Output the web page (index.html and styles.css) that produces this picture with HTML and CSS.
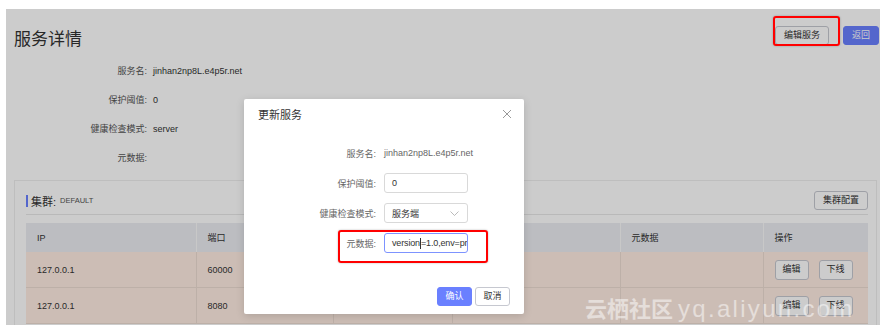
FILE: index.html
```html
<!DOCTYPE html>
<html lang="zh-CN">
<head>
    <meta charset="UTF-8">
    <meta name="viewport" content="width=device-width, initial-scale=1.0">
    <title>服务详情</title>
    <link rel="stylesheet" href="styles.css">
</head>
<body>
    <div class="shot">
        <div class="page">
            <div class="page-head">
                <h1 class="page-title">服务详情</h1>
                <div class="head-actions">
                    <button class="btn">编辑服务</button>
                    <button class="btn btn-primary">返回</button>
                </div>
            </div>

            <div class="info">
                <div class="info-row"><span class="info-label">服务名:</span><span class="info-value">jinhan2np8L.e4p5r.net</span></div>
                <div class="info-row"><span class="info-label">保护阈值:</span><span class="info-value">0</span></div>
                <div class="info-row"><span class="info-label">健康检查模式:</span><span class="info-value">server</span></div>
                <div class="info-row"><span class="info-label">元数据:</span><span class="info-value"></span></div>
            </div>

            <div class="card">
                <div class="card-head">
                    <div class="card-title"><span class="card-bar"></span>集群:<span class="card-sub">DEFAULT</span></div>
                    <button class="btn">集群配置</button>
                </div>
                <table class="instances">
                    <colgroup>
                        <col style="width: 170px">
                        <col style="width: 137px">
                        <col style="width: 119px">
                        <col style="width: 168px">
                        <col style="width: 143px">
                        <col style="width: 105px">
                    </colgroup>
                    <thead>
                        <tr>
                            <th>IP</th>
                            <th>端口</th>
                            <th>权重</th>
                            <th>健康状态</th>
                            <th>元数据</th>
                            <th>操作</th>
                        </tr>
                    </thead>
                    <tbody>
                        <tr>
                            <td>127.0.0.1</td>
                            <td>60000</td>
                            <td>1</td>
                            <td>true</td>
                            <td></td>
                            <td><div class="row-actions"><button class="btn btn-sm">编辑</button><button class="btn btn-sm">下线</button></div></td>
                        </tr>
                        <tr>
                            <td>127.0.0.1</td>
                            <td>8080</td>
                            <td>1</td>
                            <td>true</td>
                            <td></td>
                            <td><div class="row-actions"><button class="btn btn-sm">编辑</button><button class="btn btn-sm">下线</button></div></td>
                        </tr>
                    </tbody>
                </table>
            </div>
        </div>

        <div class="mask"></div>
        <div class="mark mark-edit"></div>

        <div class="modal">
            <div class="modal-head">
                <span class="modal-title">更新服务</span>
                <svg class="modal-close" width="10" height="10" viewBox="0 0 10 10">
                    <path d="M1 1L9 9M9 1L1 9" stroke="#999" stroke-width="1" fill="none"/>
                </svg>
            </div>
            <div class="modal-body">
                <div class="form-row">
                    <span class="form-label">服务名:</span>
                    <span class="form-text">jinhan2np8L.e4p5r.net</span>
                </div>
                <div class="form-row">
                    <span class="form-label">保护阈值:</span>
                    <div class="field">0</div>
                </div>
                <div class="form-row">
                    <span class="form-label">健康检查模式:</span>
                    <div class="field field-select">
                        <span>服务端</span>
                        <svg width="9" height="5" viewBox="0 0 9 5">
                            <path d="M0.5 0.5L4.5 4.5L8.5 0.5" stroke="#aaa" stroke-width="0.8" fill="none"/>
                        </svg>
                    </div>
                </div>
                <div class="form-row">
                    <span class="form-label">元数据:</span>
                    <div class="field field-focus">version<span class="caret"></span>=1.0,env=pr</div>
                </div>
            </div>
            <div class="modal-foot">
                <button class="btn btn-primary btn-md">确认</button>
                <button class="btn btn-md">取消</button>
            </div>
            <div class="mark mark-meta"></div>
        </div>

        <div class="watermark">云栖社区 <span class="watermark-url">yq.aliyun.com</span></div>
    </div>
</body>
</html>
```

FILE: styles.css
```css
body {
    margin: 9px 0 0 6px;
    background-color: #fff;
    font-family: "Liberation Sans", "Noto Sans CJK SC", sans-serif;
    font-size: 9px;
    color: #333;
}

.shot {
    position: relative;
    width: 874px;
    height: 316px;
    overflow: hidden;
    background-color: #fff;
}

.page {
    padding: 0 1px 0 8px;
}

.page-head {
    display: flex;
    justify-content: space-between;
    align-items: flex-start;
    padding-top: 17px;
}

.page-title {
    margin: 4px 0 0;
    font-size: 17px;
    line-height: 20px;
    font-weight: normal;
    color: #333;
}

.head-actions {
    display: flex;
    gap: 14px;
}

.btn {
    height: 19px;
    padding: 0 8px;
    border: 1px solid #c6c8d0;
    border-radius: 3px;
    background-color: #fff;
    color: #333;
    font-family: inherit;
    font-size: 9px;
    line-height: 17px;
}

.btn-primary {
    border-color: #6a80ff;
    background-color: #6a80ff;
    color: #fff;
}

.btn-sm {
    padding: 0 7px;
    height: 20px;
}

.btn-md {
    width: 35px;
    padding: 0;
}

.info {
    margin-top: 6px;
}

.info-row {
    display: flex;
    align-items: center;
    height: 29px;
}

.info-label {
    width: 133px;
    text-align: right;
    color: #555;
}

.info-value {
    margin-left: 6px;
    color: #333;
}

.card {
    margin: 8px 2px 0 0;
    padding: 0 8px 0 11px;
    border: 1px solid #eee;
    border-bottom: none;
    background-color: #fff;
    height: 200px;
}

.card-head {
    display: flex;
    justify-content: space-between;
    align-items: center;
    padding: 10px 0 4px;
    border-bottom: 1px solid #e8e8e8;
}

.card-title {
    display: flex;
    align-items: center;
    font-size: 11px;
    color: #333;
}

.card-bar {
    width: 2px;
    height: 12px;
    margin-right: 3px;
    background-color: #6a80ff;
}

.card-sub {
    margin-left: 4px;
    font-size: 7.5px;
    color: #555;
}

.instances {
    width: 842px;
    margin-top: 8px;
    border-collapse: collapse;
    table-layout: fixed;
}

.instances th {
    height: 29px;
    padding: 0 11px;
    background-color: #ebedf2;
    border-right: 1px solid #fafafa;
    font-weight: normal;
    text-align: left;
    color: #333;
}

.instances td {
    height: 35px;
    padding: 0 11px;
    background-color: #ffede3;
    border-right: 1px solid #eddcd2;
    border-bottom: 1px solid #eddcd2;
    color: #333;
}

.instances th:last-child,
.instances td:last-child {
    border-right: none;
}

.row-actions {
    display: flex;
    gap: 10px;
}

.mask {
    position: absolute;
    inset: 0;
    background-color: rgba(0, 0, 0, 0.2);
}

.mark {
    position: absolute;
    border: 2px solid #ff0000;
    border-radius: 3px;
    box-shadow: 0 0 2px rgba(0, 0, 0, 0.3);
}

.mark-edit {
    left: 767px;
    top: 7px;
    width: 63px;
    height: 26px;
}

.modal {
    position: absolute;
    left: 238px;
    top: 90px;
    width: 280px;
    height: 215px;
    display: flex;
    flex-direction: column;
    background-color: #fff;
    border-radius: 2px;
    box-shadow: 0 2px 8px rgba(0, 0, 0, 0.15);
}

.modal-head {
    display: flex;
    justify-content: space-between;
    align-items: center;
    height: 30px;
    padding: 0 12px 0 14px;
}

.modal-title {
    font-size: 11px;
    color: #333;
}

.modal-body {
    display: flex;
    flex-direction: column;
    gap: 10px;
    padding-top: 14px;
}

.form-row {
    display: flex;
    align-items: center;
    height: 20px;
}

.form-label {
    width: 132px;
    text-align: right;
    color: #666;
}

.form-text {
    margin-left: 8px;
    color: #666;
}

.field {
    box-sizing: border-box;
    display: flex;
    align-items: center;
    width: 84px;
    height: 20px;
    margin-left: 8px;
    padding: 0 7px;
    border: 1px solid #d9d9d9;
    border-radius: 3px;
    color: #333;
    white-space: nowrap;
    overflow: hidden;
}

.field-select {
    justify-content: space-between;
    padding-right: 8px;
}

.field-focus {
    padding-left: 7px;
    border-color: #7d93ff;
    letter-spacing: -0.15px;
}

.caret {
    display: inline-block;
    width: 0;
    height: 11px;
    border-left: 1px solid #333;
}

.modal-foot {
    display: flex;
    justify-content: flex-end;
    gap: 3px;
    margin-top: auto;
    padding: 0 14px 8px;
}

.mark-meta {
    left: 94px;
    top: 131px;
    width: 146px;
    height: 29px;
}

.watermark {
    position: absolute;
    left: 579px;
    top: 283px;
    font-family: "Noto Sans CJK SC", sans-serif;
    font-size: 22px;
    font-weight: 600;
    line-height: 30px;
    color: rgba(255, 255, 255, 0.5);
    white-space: nowrap;
}

.watermark-url {
    font-family: "Liberation Sans", sans-serif;
    font-size: 24px;
    font-weight: normal;
    letter-spacing: 2.3px;
}
```
